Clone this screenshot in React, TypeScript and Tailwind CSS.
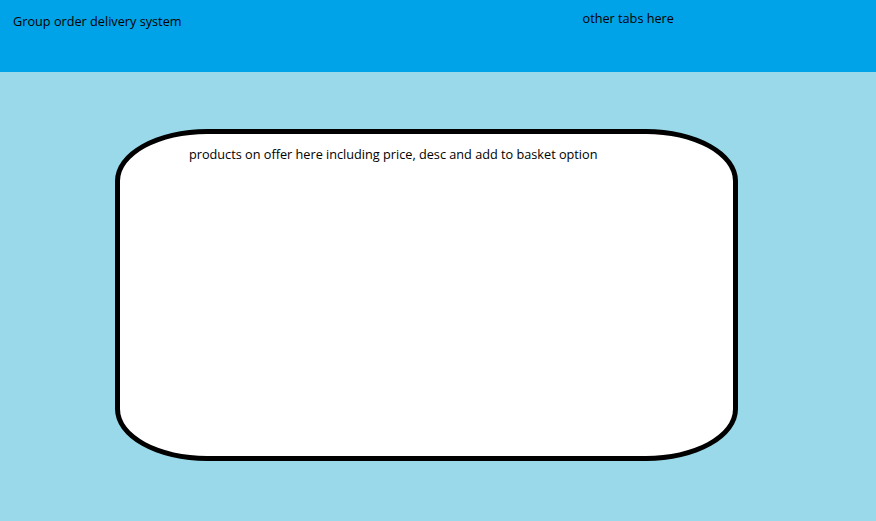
export default function App() {
  return (
    <div
      className="w-[876px] h-[521px] bg-[#99d9ea] flex flex-col text-black"
      style={{ fontFamily: '"Open Sans", "Noto Sans", sans-serif' }}
    >
      {/* Top bar */}
      <header className="h-[72px] bg-[#00a2e8] flex items-start">
        <div className="pl-[13px] pt-[13px] text-[12.7px] leading-[17px]">
          Group order delivery system
        </div>
        <div className="ml-[401px] pt-[10px] text-[12.7px] leading-[17px]">
          other tabs here
        </div>
      </header>

      {/* Products panel */}
      <main className="pl-[115px] pt-[57px]">
        <div className="w-[623px] h-[332px] bg-white border-[5px] border-black rounded-[92px/52px] pl-[69px] pt-[12px]">
          <p className="text-[12.7px] leading-[17px]">
            products on offer here including price, desc and add to basket option
          </p>
        </div>
      </main>
    </div>
  );
}
